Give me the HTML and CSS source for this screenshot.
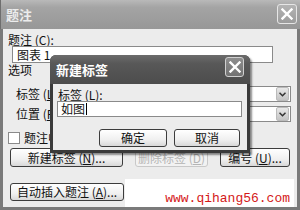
FILE: index.html
```html
<!DOCTYPE html>
<html>
<head>
<meta charset="utf-8">
<link rel="stylesheet" href="styles.css">
</head>
<body>
<div class="win">
  <div class="title">
    <span class="title-text">题注</span>
    <span class="close"><svg width="12" height="12" viewBox="0 0 12 12"><path d="M1.5 1.5 L10.5 10.5 M10.5 1.5 L1.5 10.5" stroke="#fff" stroke-width="2.4" stroke-linecap="square"/></svg></span>
  </div>
  <div class="client">
    <div class="lbl-cap">题注 (<u>C</u>):</div>
    <div class="txt-cap">图表 1</div>
    <div class="lbl-opt">选项</div>
    <div class="opt-row first">
      <span class="opt-lbl">标签 (<u>L</u>):</span>
      <span class="combo"><span class="combo-btn"><svg width="7" height="5" viewBox="0 0 7 5"><path d="M0.5 0.8 L3.5 3.8 L6.5 0.8" fill="none" stroke="#333" stroke-width="1.5"/></svg></span></span>
    </div>
    <div class="opt-row">
      <span class="opt-lbl">位置 (<u>P</u>):</span>
      <span class="combo"><span class="combo-btn"><svg width="7" height="5" viewBox="0 0 7 5"><path d="M0.5 0.8 L3.5 3.8 L6.5 0.8" fill="none" stroke="#333" stroke-width="1.5"/></svg></span></span>
    </div>
    <div class="chk-row"><span class="chk"></span><span>题注中不包含标签</span></div>
    <div class="btn-row">
      <span class="btn b-new">新建标签 (<u>N</u>)...</span>
      <span class="btn b-del">删除标签 (<u>D</u>)</span>
      <span class="btn b-num">编号 (<u>U</u>)...</span>
    </div>
    <div class="auto-row"><span class="btn b-auto">自动插入题注 (<u>A</u>)...</span></div>
  </div>

  <div class="dlg">
    <div class="dlg-title">
      <span class="dlg-title-text">新建标签</span>
      <span class="dlg-close"><svg width="12" height="12" viewBox="0 0 12 12"><path d="M1.5 1.5 L10.5 10.5 M10.5 1.5 L1.5 10.5" stroke="#fff" stroke-width="2.4" stroke-linecap="square"/></svg></span>
    </div>
    <div class="dlg-client">
      <div class="dlg-lbl">标签 (<u>L</u>):</div>
      <div class="dlg-txt">如图<span class="caret"></span></div>
      <div class="dlg-btns">
        <span class="btn b-ok">确定</span>
        <span class="btn b-cancel">取消</span>
      </div>
    </div>
  </div>

  <div class="mark"><span>www.qihang56.com</span></div>
</div>
</body>
</html>
```

FILE: styles.css
```css
html, body {
  margin: 0;
  padding: 0;
  background: #ffffff;
}
body {
  font-family: "Noto Sans CJK SC", "DejaVu Sans", sans-serif;
  font-size: 12px;
  color: #111;
}
u { text-decoration: underline; }

.win {
  position: relative;
  width: 300px;
  height: 210px;
  background: #7a7a7a;
  display: flex;
  flex-direction: column;
  box-sizing: border-box;
}
.title {
  height: 29px;
  flex: none;
  display: flex;
  align-items: flex-start;
  justify-content: space-between;
  background: linear-gradient(#b9b9b9 0%, #a4a4a4 25%, #979797 100%);
  border-left: 1px solid #6e6e6e;
  box-sizing: border-box;
}
.title-text {
  margin: 7px 0 0 5px;
  color: #ececec;
  font-weight: bold;
  font-size: 13px;
  line-height: 16px;
}
.close {
  margin: 4px 3px 0 0;
  width: 20px;
  height: 20px;
  box-sizing: border-box;
  border: 1px solid #e6e6e6;
  border-radius: 3px;
  background: linear-gradient(#b4b4b4, #9c9c9c);
  display: flex;
  align-items: center;
  justify-content: center;
}
.client {
  flex: 1;
  margin: 0 3px 3px 3px;
  background: #ececec;
  padding: 4px 6px 0 4px;
  display: flex;
  flex-direction: column;
}
.lbl-cap {
  height: 13px;
  line-height: 13px;
  padding-left: 1px;
}
.txt-cap {
  margin-left: 5px;
  width: 261px;
  height: 17px;
  box-sizing: border-box;
  border: 1px solid #8a8a8a;
  background: #fff;
  line-height: 15px;
  padding-left: 4px;
}
.lbl-opt {
  height: 13px;
  line-height: 13px;
  padding-left: 1px;
}
.opt-row {
  display: flex;
  align-items: center;
  height: 16px;
  margin-top: 4px;
}
.opt-row.first { margin-top: 10px; }
.opt-lbl {
  margin-left: 9px;
  line-height: 16px;
}
.combo {
  margin-left: auto;
  width: 211px;
  height: 16px;
  box-sizing: border-box;
  border: 1px solid #8a8a8a;
  background: #fff;
  display: flex;
  justify-content: flex-end;
  padding: 0 1px;
}
.combo-btn {
  width: 13px;
  height: 14px;
  box-sizing: border-box;
  border: 1px solid #bbb;
  border-radius: 2px;
  background: linear-gradient(#e8e8e8, #c4c4c4);
  display: flex;
  align-items: center;
  justify-content: center;
}
.chk-row {
  display: flex;
  align-items: center;
  height: 13px;
  margin-top: 9px;
  margin-left: 1px;
}
.chk {
  width: 12px;
  height: 12px;
  box-sizing: border-box;
  border: 1px solid #8a8a8a;
  background: #fff;
  margin-right: 4px;
}
.btn {
  box-sizing: border-box;
  border: 1px solid #3c3c3c;
  border-radius: 3px;
  background: linear-gradient(#ffffff, #f0f0f0 60%, #d8d8d8);
  display: flex;
  align-items: center;
  justify-content: center;
  line-height: 14px;
  white-space: nowrap;
}
.btn-row {
  display: flex;
  height: 19px;
  margin-top: 4px;
  margin-left: 3px;
  gap: 12px;
}
.b-new { width: 113px; }
.b-del {
  width: 73px;
  color: #b4b4b4;
  border-color: #c8c8c8;
  background: #f2f2f2;
}
.b-num { width: 70px; }
.auto-row {
  display: flex;
  margin-top: 16px;
  margin-left: 3px;
  height: 18px;
}
.b-auto { width: 114px; }

.dlg {
  position: absolute;
  left: 50px;
  top: 55px;
  width: 200px;
  height: 98px;
  background: #3a3a3a;
  border-radius: 6px 6px 0 0;
  box-shadow: 2px 2px 2px rgba(0, 0, 0, 0.45);
  display: flex;
  flex-direction: column;
}
.dlg-title {
  height: 29px;
  flex: none;
  display: flex;
  justify-content: space-between;
  align-items: flex-start;
  border-radius: 6px 6px 0 0;
  background: linear-gradient(#6c6c6c 0%, #585858 30%, #4c4c4c 100%);
}
.dlg-title-text {
  margin: 7px 0 0 6px;
  color: #fff;
  font-weight: bold;
  font-size: 13px;
  line-height: 16px;
}
.dlg-close {
  margin: 2px 6px 0 0;
  width: 19px;
  height: 20px;
  box-sizing: border-box;
  border: 1px solid #d0d0d0;
  border-radius: 3px;
  background: linear-gradient(#8e8e8e, #727272);
  display: flex;
  align-items: center;
  justify-content: center;
}
.dlg-client {
  flex: 1;
  margin: 0 3px 3px 3px;
  background: #ececec;
  padding: 4px 0 0 4px;
  display: flex;
  flex-direction: column;
}
.dlg-lbl {
  height: 13px;
  line-height: 13px;
  padding-left: 1px;
}
.dlg-txt {
  width: 185px;
  height: 16px;
  box-sizing: border-box;
  border: 1px solid #8a8a8a;
  background: #fff;
  line-height: 14px;
  padding-left: 3px;
  display: flex;
  align-items: center;
}
.caret {
  width: 1px;
  height: 12px;
  background: #000;
  margin-left: 1px;
}
.dlg-btns {
  display: flex;
  margin-top: 12px;
  margin-left: 42px;
  gap: 7px;
  height: 18px;
}
.b-ok { width: 68px; }
.b-cancel { width: 66px; }

.mark {
  position: absolute;
  left: 125px;
  top: 179px;
  width: 169px;
  height: 28px;
  background: #fff;
  display: flex;
  align-items: flex-end;
  justify-content: flex-end;
  padding: 0 4px 2px 0;
  box-sizing: border-box;
}
.mark span {
  font-family: "Liberation Mono", "DejaVu Sans Mono", monospace;
  font-size: 13px;
  line-height: 13px;
  color: #d41818;
}
```
